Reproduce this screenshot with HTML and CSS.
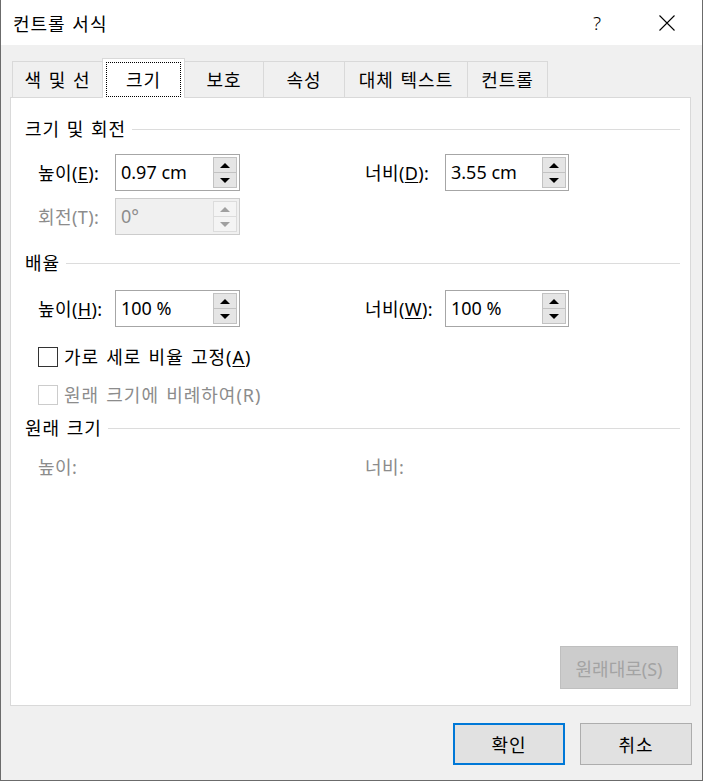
FILE: index.html
```html
<!DOCTYPE html>
<html lang="ko">
<head>
<meta charset="utf-8">
<title>컨트롤 서식</title>
<link rel="stylesheet" href="styles.css">
</head>
<body>
<div class="window">
  <div class="titlebar">
    <span class="title">컨트롤 서식</span>
    <span class="help">?</span>
    <span class="close"><svg width="16" height="16" viewBox="0 0 16 16"><path d="M0.5 0.5 L15.5 15.5 M15.5 0.5 L0.5 15.5" stroke="#000" stroke-width="1.1" fill="none"/></svg></span>
  </div>
  <div class="body">
    <div class="tabs">
      <div class="tab w1 first">색 및 선</div>
      <div class="tab sel"><span class="focus">크기</span></div>
      <div class="tab w3">보호</div>
      <div class="tab w4">속성</div>
      <div class="tab w5">대체 텍스트</div>
      <div class="tab w6">컨트롤</div>
    </div>
    <div class="panel">
      <div class="sh s1">크기 및 회전</div>
      <div class="row r1">
        <span class="lbl">높이(<u>E</u>):</span>
        <div class="spin"><span class="val">0.97 cm</span><span class="btns"><span class="sb"><i class="up"></i></span><span class="sb"><i class="dn"></i></span></span></div>
        <span class="lbl l2">너비(<u>D</u>):</span>
        <div class="spin"><span class="val">3.55 cm</span><span class="btns"><span class="sb"><i class="up"></i></span><span class="sb"><i class="dn"></i></span></span></div>
      </div>
      <div class="row r2">
        <span class="lbl dim">회전(T):</span>
        <div class="spin dis"><span class="val">0°</span><span class="btns"><span class="sb"><i class="up"></i></span><span class="sb"><i class="dn"></i></span></span></div>
      </div>
      <div class="sh s2">배율</div>
      <div class="row r3">
        <span class="lbl">높이(<u>H</u>):</span>
        <div class="spin"><span class="val">100 %</span><span class="btns"><span class="sb"><i class="up"></i></span><span class="sb"><i class="dn"></i></span></span></div>
        <span class="lbl l2">너비(<u>W</u>):</span>
        <div class="spin"><span class="val">100 %</span><span class="btns"><span class="sb"><i class="up"></i></span><span class="sb"><i class="dn"></i></span></span></div>
      </div>
      <div class="check c1"><span class="cb"></span><span class="ct">가로 세로 비율 고정(<u>A</u>)</span></div>
      <div class="check c2 dim"><span class="cb"></span><span class="ct">원래 크기에 비례하여(R)</span></div>
      <div class="sh s3">원래 크기</div>
      <div class="row r4 dim">
        <span class="lbl">높이:</span>
        <span></span>
        <span class="lbl l2">너비:</span>
      </div>
      <div class="reset">원래대로(S)</div>
    </div>
    <div class="actions">
      <div class="pb def">확인</div>
      <div class="pb">취소</div>
    </div>
  </div>
</div>
</body>
</html>
```
FILE: styles.css
```css
* { box-sizing: border-box; }
html, body { margin: 0; padding: 0; background: #fff; }
body {
  font-family: "Noto Sans", "Noto Sans CJK KR", sans-serif;
  font-size: 18px;
  color: #000;
}
u { text-decoration-thickness: 1px; text-underline-offset: 2px; }

.window {
  width: 703px;
  height: 781px;
  border: 1px solid #6b6b6b;
  border-top: none;
  background: #f0f0f0;
  display: flex;
  flex-direction: column;
}

.titlebar {
  height: 45px;
  flex: none;
  background: #fff;
  display: flex;
  align-items: center;
  padding: 0 27px 0 12px;
}
.title { flex: 1; line-height: 24px; margin-top: 2px; letter-spacing: 1px; word-spacing: 1px; }
.help {
  width: 20px;
  text-align: center;
  font-weight: 300;
  font-size: 19px;
  line-height: 24px;
  margin-right: 52px;
}
.close { width: 16px; height: 16px; display: flex; }

.body { flex: 1; display: flex; flex-direction: column; }

.tabs {
  display: flex;
  align-items: flex-end;
  height: 40px;
  margin: 13px 0 -1px 11px;
  position: relative;
  z-index: 1;
}
.tab {
  height: 37px;
  border-top: 1px solid #d9d9d9;
  border-right: 1px solid #d9d9d9;
  display: flex;
  align-items: center;
  justify-content: center;
  line-height: 24px;
  letter-spacing: 1px;
  word-spacing: 1px;
}
.tab.first { border-right: none; border-left: 1px solid #d9d9d9; }
.w1 { width: 90px; }
.w3 { width: 79px; }
.w4 { width: 81px; }
.w5 { width: 123px; }
.w6 { width: 80px; }
.tab.sel {
  width: 83px;
  height: 40px;
  background: #fff;
  border: 1px solid #d9d9d9;
  border-bottom: none;
  align-items: flex-start;
  padding: 3px 0 0 3px;
  justify-content: flex-start;
}
.focus {
  width: 75px;
  height: 35px;
  outline: 1px dotted #000;
  outline-offset: -1px;
  display: flex;
  align-items: center;
  justify-content: center;
}

.panel {
  margin-left: 9px;
  width: 681px;
  height: 609px;
  flex: none;
  background: #fff;
  border: 1px solid #d9d9d9;
  display: flex;
  flex-direction: column;
  padding: 0 10px 16px 14px;
}

.sh {
  display: flex;
  align-items: center;
  height: 22px;
  line-height: 22px;
  white-space: nowrap;
  letter-spacing: 1px;
  word-spacing: 1px;
}
.sh::after {
  content: "";
  flex: 1;
  border-top: 1px solid #dcdcdc;
  margin-left: 6px;
}
.s1 { margin-top: 20px; }
.s2 { margin-top: 17px; }
.s3 { margin-top: 12px; }

.row {
  display: grid;
  grid-template-columns: 77px 125px 125px 80px 124px;
  align-items: center;
  margin-left: 13px;
  height: 37px;
}
.row .l2 { grid-column: 4; }
.r1 { margin-top: 14px; }
.r2 { margin-top: 7px; }
.r3 { margin-top: 16px; }
.r4 { margin-top: 16px; height: 24px; }
.lbl { line-height: 24px; white-space: nowrap; letter-spacing: 0.4px; }

.spin {
  height: 37px;
  border: 1px solid #a6a6a6;
  background: #fff;
  display: flex;
  padding: 2px 2px 2px 0;
}
.val { flex: 1; padding-left: 5px; line-height: 31px; white-space: nowrap; }
.btns { width: 24px; display: flex; flex-direction: column; }
.sb {
  flex: 1;
  background: #e5e5e5;
  border: 1px solid #c2c2c2;
  display: flex;
  align-items: center;
  justify-content: center;
}
.sb + .sb { border-top: none; }
.up, .dn { width: 0; height: 0; border-left: 5px solid transparent; border-right: 5px solid transparent; }
.up { border-bottom: 5px solid #000; }
.dn { border-top: 5px solid #000; }

.spin.dis { border-color: #cccccc; background: #f0f0f0; }
.spin.dis .val { color: #8c8c8c; }
.spin.dis .sb { background: #f4f4f4; border-color: #dcdcdc; }
.spin.dis .up { border-bottom-color: #a0a0a0; }
.spin.dis .dn { border-top-color: #a0a0a0; }

.dim { color: #8c8c8c; }

.check {
  display: flex;
  align-items: center;
  height: 20px;
  margin-left: 13px;
}
.c1 { margin-top: 20px; }
.c2 { margin-top: 18px; }
.cb { width: 20px; height: 20px; border: 1px solid #333; background: #fff; flex: none; }
.c2 .cb { border-color: #cccccc; }
.ct { margin-left: 6px; line-height: 24px; white-space: nowrap; letter-spacing: 1px; word-spacing: 1.5px; }

.reset {
  margin-top: auto;
  align-self: flex-end;
  margin-right: 2px;
  width: 118px;
  height: 43px;
  background: #cccccc;
  border: 1px solid #bfbfbf;
  color: #a3a3a3;
  display: flex;
  align-items: center;
  justify-content: center;
}

.actions {
  display: flex;
  justify-content: flex-end;
  gap: 15px;
  margin-top: 17px;
  padding-right: 10px;
}
.pb {
  width: 112px;
  height: 42px;
  background: #e1e1e1;
  border: 1px solid #adadad;
  display: flex;
  align-items: center;
  justify-content: center;
  letter-spacing: 1px;
}
.pb.def { border: 2px solid #0078d7; }
```
